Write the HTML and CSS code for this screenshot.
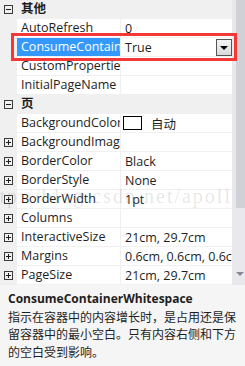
FILE: index.html
```html
<!DOCTYPE html>
<html lang="zh">
<head>
  <meta charset="UTF-8">
  <title>属性</title>
  <link rel="stylesheet" href="styles.css">
</head>
<body>

<div class="grid">
  <div class="rows">
    <div class="cat"><span class="gut"><span class="box minus"></span></span><span class="cat-name">其他</span></div>
    <div class="prop"><span class="gut"></span><span class="name">AutoRefresh</span><span class="val">0</span></div>
    <div class="prop sel"><span class="gut"></span><span class="name">ConsumeContainerWhitespace</span><span class="val"><span class="txt">True</span><span class="dd-btn"></span></span></div>
    <div class="prop"><span class="gut"></span><span class="name">CustomProperties</span><span class="val"></span></div>
    <div class="prop"><span class="gut"></span><span class="name">InitialPageName</span><span class="val"></span></div>

    <div class="cat"><span class="gut"><span class="box minus"></span></span><span class="cat-name">页</span></div>
    <div class="prop"><span class="gut"></span><span class="name">BackgroundColor</span><span class="val"><span class="swatch"></span>自动</span></div>
    <div class="prop"><span class="gut"><span class="box plus"></span></span><span class="name">BackgroundImage</span><span class="val"></span></div>
    <div class="prop"><span class="gut"><span class="box plus"></span></span><span class="name">BorderColor</span><span class="val">Black</span></div>
    <div class="prop"><span class="gut"><span class="box plus"></span></span><span class="name">BorderStyle</span><span class="val">None</span></div>
    <div class="prop"><span class="gut"><span class="box plus"></span></span><span class="name">BorderWidth</span><span class="val">1pt</span></div>
    <div class="prop"><span class="gut"><span class="box plus"></span></span><span class="name">Columns</span><span class="val"></span></div>
    <div class="prop"><span class="gut"><span class="box plus"></span></span><span class="name">InteractiveSize</span><span class="val">21cm, 29.7cm</span></div>
    <div class="prop"><span class="gut"><span class="box plus"></span></span><span class="name">Margins</span><span class="val">0.6cm, 0.6cm, 0.6cm, 0.6cm</span></div>
    <div class="prop"><span class="gut"><span class="box plus"></span></span><span class="name">PageSize</span><span class="val">21cm, 29.7cm</span></div>
  </div>

  <div class="scroll">
    <div class="thumb"></div>
    <span class="arrow"></span>
  </div>

  <div class="mark">http://blog.csdn.net/apoll</div>
  <div class="focus"></div>
</div>

<div class="desc">
  <div class="desc-title">ConsumeContainerWhitespace</div>
  <div class="desc-text">指示在容器中的内容增长时，是占用还是保留容器中的最小空白。只有内容右侧和下方的空白受到影响。</div>
</div>

</body>
</html>
```

FILE: styles.css
```css
body {
  margin: 0;
  width: 245px;
  height: 366px;
  overflow: hidden;
  background: #f5f5f5;
  font-family: "Open Sans", "Noto Sans CJK SC", sans-serif;
  font-size: 12px;
  color: #1e1e1e;
}

.grid {
  position: relative;
  display: flex;
  height: 285px;
  overflow: hidden;
  background: #fff;
  font-size: 12.5px;
}

.rows {
  flex: 1;
  min-width: 0;
  display: flex;
  flex-direction: column;
}

.cat, .prop {
  display: flex;
  height: 19px;
  box-sizing: border-box;
  border-bottom: 1px solid #f0f0f0;
}

.cat {
  background: #f0f0f0;
}

.cat-name {
  padding-left: 4px;
  line-height: 18px;
  font-weight: bold;
}

.gut {
  width: 17px;
  flex: none;
  background: #f0f0f0;
  display: flex;
  align-items: center;
}

.box {
  position: relative;
  width: 9px;
  height: 9px;
  margin-left: 4px;
  box-sizing: border-box;
  border: 1px solid #3a3a3a;
}

.box::before {
  content: "";
  position: absolute;
  left: 1px;
  top: 3px;
  width: 5px;
  height: 1px;
  background: #1e1e1e;
}

.box.plus::after {
  content: "";
  position: absolute;
  left: 3px;
  top: 1px;
  width: 1px;
  height: 5px;
  background: #1e1e1e;
}

.name {
  width: 104px;
  flex: none;
  box-sizing: border-box;
  padding-left: 4px;
  border-right: 1px solid #f0f0f0;
  line-height: 18px;
  white-space: nowrap;
  overflow: hidden;
}

.val {
  flex: 1;
  min-width: 0;
  display: flex;
  align-items: center;
  padding-left: 4px;
  white-space: nowrap;
  overflow: hidden;
}

.sel .name {
  background: #3399ff;
  color: #fff;
}

.txt {
  flex: 1;
}

.dd-btn {
  position: relative;
  flex: none;
  width: 16px;
  height: 17px;
  box-sizing: border-box;
  border: 1px solid #555;
  background: linear-gradient(#f4f4f4, #d9d9d9);
}

.dd-btn::after {
  content: "";
  position: absolute;
  left: 3px;
  top: 6px;
  border-left: 4px solid transparent;
  border-right: 4px solid transparent;
  border-top: 4px solid #000;
}

.swatch {
  width: 19px;
  height: 14px;
  box-sizing: border-box;
  border: 1px solid #000;
  background: #fff;
  margin-left: -2px;
  margin-right: 9px;
}

.scroll {
  position: relative;
  width: 13px;
  flex: none;
  background: #e9e9ed;
}

.thumb {
  margin-left: 4px;
  height: 208px;
  background: #d0d1d7;
}

.arrow {
  position: absolute;
  left: 4px;
  top: 272px;
  border-left: 4px solid transparent;
  border-right: 4px solid transparent;
  border-top: 4px solid #868999;
}

/* watermark and focus frame drawn over the grid */
.mark {
  position: absolute;
  left: -20px;
  top: 185px;
  font-family: "Liberation Serif", serif;
  font-size: 20px;
  letter-spacing: 2px;
  color: rgba(0, 0, 0, 0.11);
  white-space: nowrap;
  pointer-events: none;
}

.focus {
  position: absolute;
  left: 11px;
  top: 33px;
  width: 226px;
  height: 28px;
  box-sizing: border-box;
  border: 3px solid #f43838;
}

.desc {
  padding: 5px 4px 0 8px;
  line-height: 17.5px;
  font-family: "Noto Sans CJK SC", sans-serif;
}

.desc-title {
  font-family: "Open Sans", "Noto Sans CJK SC", sans-serif;
  font-weight: bold;
}
```
